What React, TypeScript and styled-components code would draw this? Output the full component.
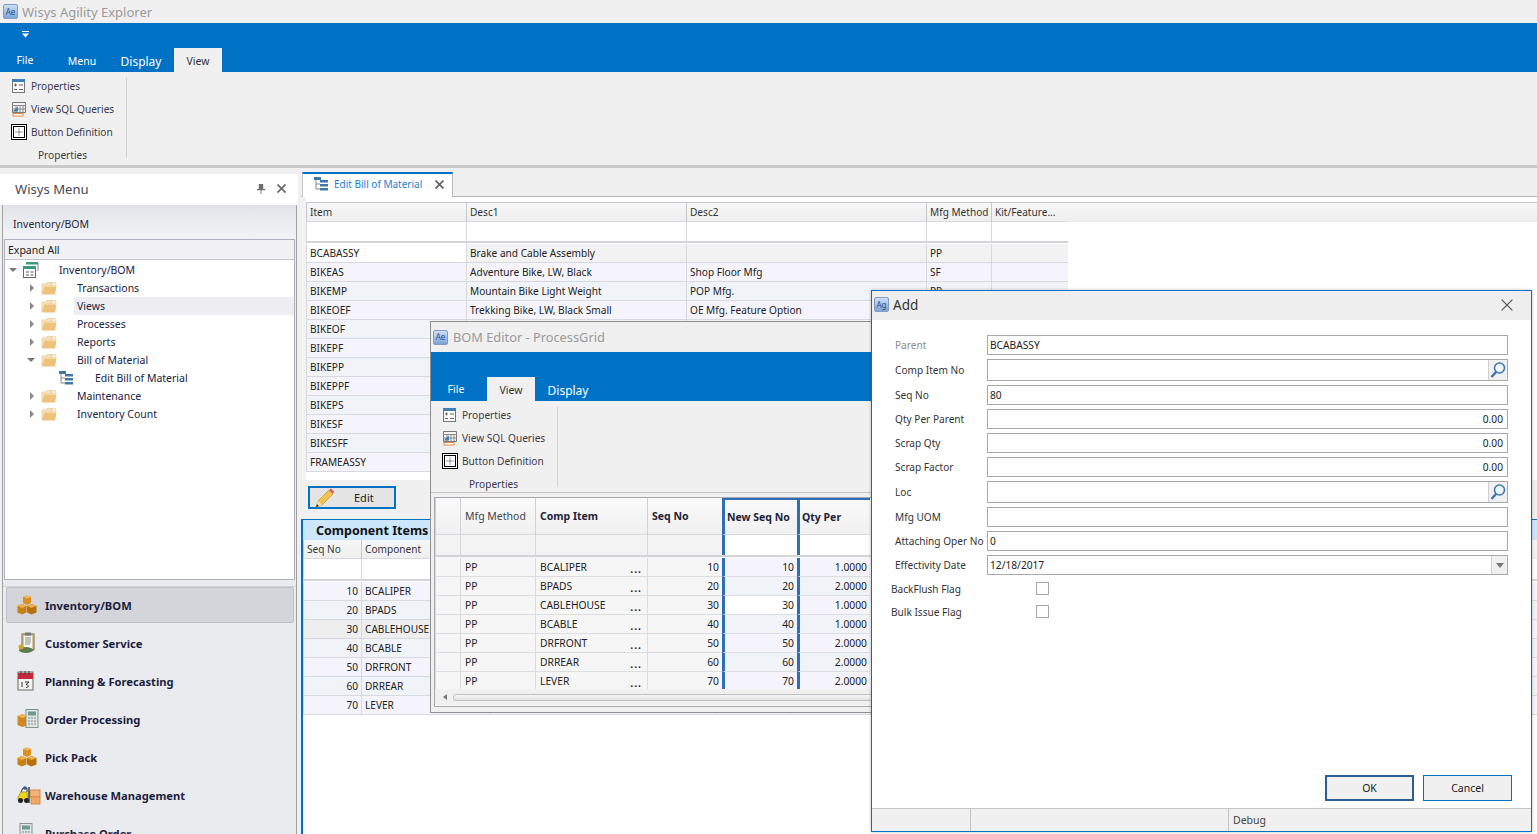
import styled, { createGlobalStyle } from "styled-components";

const GlobalStyle = createGlobalStyle`
  html, body {
    margin: 0;
    padding: 0;
    background: #f0f0f0;
  }
  * {
    box-sizing: border-box;
  }
`;

const UI_FONT = `"Noto Sans", "DejaVu Sans", sans-serif`;
const BLUE = "#0072c6";
const EDIT_LINE = "#2f6db8";

/* ---------- icons ---------- */

const PropertiesIcon = () => (
  <svg width="16" height="16" viewBox="0 0 16 16">
    <rect x="1.5" y="1.5" width="12" height="13" fill="#fafafa" stroke="#777" />
    <rect x="1" y="1" width="13" height="3" fill="#3f7fb8" />
    <path d="M3 7h3M4.5 5.5v3M8 7h4M3 11.5h3M8 11.5h4" stroke="#666" fill="none" />
  </svg>
);

const SqlIcon = () => (
  <svg width="16" height="16" viewBox="0 0 16 16">
    <path d="M1.5 1.5h13v10h-13z" fill="#f4f4f4" stroke="#777" />
    <path d="M1 4.5h14M5 4.5v7M9 4.5v7M12 4.5v7M1 8h14" stroke="#8a8a8a" fill="none" />
    <path d="M1.5 10.5 7 5.5v5z" fill="#3f7fb8" />
    <rect x="2" y="12.5" width="10" height="2.5" fill="#fff" stroke="#e58a3c" />
  </svg>
);

const ButtonDefIcon = () => (
  <svg width="16" height="16" viewBox="0 0 16 16">
    <rect x="0.5" y="0.5" width="15" height="15" fill="#fff" stroke="#000" />
    <rect x="2.5" y="2.5" width="11" height="11" fill="#fff" stroke="#000" />
    <path d="M8 4.5v7M4.5 8h7" stroke="#333" strokeDasharray="1 1" fill="none" />
  </svg>
);

const FolderIcon = () => (
  <svg width="16" height="14" viewBox="0 0 16 14">
    <path d="M1 13V3h4l1-1.500h5V5H4.500z" fill="#f6e3bd" stroke="#e6c88f" strokeWidth="0.7" />
    <path d="M11 1.500h3.500L15 5h-4z" fill="#fbf1dc" stroke="#e6c88f" strokeWidth="0.6" />
    <path d="M1 13.500 3.500 5.500H15.500L14 13.500z" fill="#eec27c" />
  </svg>
);

const TreeListIcon = ({ size = 14 }: { size?: number }) => (
  <svg width={size} height={size} viewBox="0 0 14 14">
    <path d="M2 3v9h4M2 7h4" stroke="#888" fill="none" />
    <rect x="0" y="0" width="7" height="3" fill="#3f78ad" />
    <rect x="6" y="3" width="8" height="2.500" fill="#3f78ad" />
    <rect x="6" y="7" width="8" height="2.500" fill="#3f78ad" />
    <rect x="6" y="11" width="8" height="2.500" fill="#3f78ad" />
  </svg>
);

const RootIcon = () => (
  <svg width="17" height="16" viewBox="0 0 17 16">
    <path d="M3 1h12v8" fill="none" stroke="#888" />
    <rect x="3" y="0" width="12" height="2.500" fill="#3b9a7c" />
    <rect x="0.500" y="4.500" width="12" height="11" fill="#fff" stroke="#666" />
    <rect x="0" y="4" width="13" height="3" fill="#3b9a7c" />
    <path d="M3 10h3M7.500 10h3M3 13h3M7.500 13h3" stroke="#555" fill="none" />
  </svg>
);

const Boxes = () => (
  <svg width="20" height="20" viewBox="0 0 20 20">
    <path d="M6 2l4-1.500 4 1.500v6l-4 2-4-2z" fill="#d9901d" />
    <path d="M6 2l4 1.500 4-1.500-4-1.500z" fill="#f0bb55" />
    <path d="M0.500 11l4.500-2 4.500 2v6.500l-4.500 2-4.500-2z" fill="#c97f12" />
    <path d="M0.500 11l4.500 2 4.500-2-4.500-2z" fill="#eeb24a" />
    <path d="M10 11l4.500-2 5 2v6.500l-5 2-4.500-2z" fill="#b8700c" />
    <path d="M10 11l4.500 2 5-2-5-2z" fill="#ecae45" />
  </svg>
);

const ClipboardIcon = () => (
  <svg width="20" height="22" viewBox="0 0 20 22">
    <rect x="5" y="2" width="12" height="16" fill="#d7c9a4" stroke="#7d6b45" />
    <rect x="7" y="4" width="8" height="12" fill="#fbfbf4" />
    <path d="M8 6h6M8 8h6M8 10h6M8 12h5" stroke="#8a8a8a" />
    <rect x="8" y="0.500" width="6" height="3" fill="#777" />
    <ellipse cx="9" cy="18" rx="7" ry="3" fill="#5c7d4f" />
    <circle cx="4" cy="15" r="2.500" fill="#d7a428" />
  </svg>
);

const CalendarIcon = () => (
  <svg width="18" height="20" viewBox="0 0 18 20">
    <rect x="1" y="1" width="15" height="18" fill="#f1f1ef" stroke="#6b6b6b" />
    <rect x="1" y="2" width="15" height="6" fill="#c9283a" />
    <path d="M4 0v4M8 0v4M12 0v4" stroke="#444" />
    <path d="M5 11v5M8 11h4l-3 2.500c3 0 3 3 0 3" stroke="#333" fill="none" />
  </svg>
);

const OrderIcon = () => (
  <svg width="22" height="20" viewBox="0 0 22 20">
    <path d="M0.500 7l5-2 5 2v9l-5 2-5-2z" fill="#cf861a" />
    <path d="M0.500 7l5 2 5-2-5-2z" fill="#efb750" />
    <rect x="9" y="0.500" width="12" height="18" fill="#dfe6e4" stroke="#88928f" />
    <rect x="11" y="2.500" width="8" height="4" fill="#6f9a8f" />
    <path d="M11 9h8M11 12h8M11 15h8" stroke="#7d8a87" strokeDasharray="2 1" />
  </svg>
);

const ForkliftIcon = () => (
  <svg width="24" height="20" viewBox="0 0 24 20">
    <rect x="13" y="5" width="10" height="7" fill="#f3b27a" stroke="#d08a4c" />
    <rect x="14" y="12" width="9" height="7" fill="#f2a767" stroke="#d08a4c" />
    <path d="M1 12l3-5h6l1 8H1z" fill="#f0d51e" stroke="#8d7c12" strokeWidth="0.6" />
    <path d="M12 2v16" stroke="#444" strokeWidth="1.500" />
    <path d="M4 7l2-4h4v4" fill="none" stroke="#333" />
    <circle cx="8" cy="3" r="1.800" fill="#2a57a8" />
    <circle cx="3.500" cy="15.500" r="2.500" fill="#222" />
    <circle cx="9.500" cy="15.500" r="2.500" fill="#222" />
  </svg>
);

const CalcIcon = () => (
  <svg width="18" height="20" viewBox="0 0 18 20">
    <rect x="3" y="0.500" width="12" height="19" fill="#dfe6e4" stroke="#88928f" />
    <rect x="5" y="2.500" width="8" height="4" fill="#6f9a8f" />
    <path d="M5 9h8M5 12h8M5 15h8" stroke="#7d8a87" strokeDasharray="2 1" />
  </svg>
);

const PencilIcon = () => (
  <svg width="20" height="20" viewBox="0 0 20 20">
    <path d="M1 19l2-6L14 2l4 4L7 17z" fill="#f2c14e" stroke="#b88a25" strokeWidth="0.600" />
    <path d="M14 2l2-1.500 3 3L18 6z" fill="#d8556a" />
    <path d="M1 19l2-6 4 4z" fill="#f7e3c0" />
    <path d="M1 19l1-3 2 2z" fill="#333" />
  </svg>
);

const SearchIcon = () => (
  <svg width="18" height="18" viewBox="0 0 18 18">
    <circle cx="10.500" cy="7" r="5" fill="#eef5fb" stroke="#3f78ad" strokeWidth="1.600" />
    <path d="M7 11 2.500 16" stroke="#3f78ad" strokeWidth="2.600" />
  </svg>
);

const PinIcon = () => (
  <svg width="8" height="10" viewBox="0 0 9 11">
    <path d="M2 0h5v5.500h2V7H5v4H4V7H0V5.500h2z" fill="#6d6d6d" />
  </svg>
);

const CloseGlyph = ({ size = 9, color = "#6d6d6d", weight = 2 }: { size?: number; color?: string; weight?: number }) => (
  <svg width={size} height={size} viewBox="0 0 10 10">
    <path d="M0.500 0.500l9 9M9.500 0.500l-9 9" stroke={color} strokeWidth={weight} fill="none" />
  </svg>
);

const QuickAccessIcon = () => (
  <svg width="7" height="7" viewBox="0 0 7 7">
    <path d="M0 0h7v1H0zM0 2.500h7L3.500 6.500z" fill="#fff" />
  </svg>
);

/* ---------- data ---------- */

const treeRows = [
  { label: "Inventory/BOM", level: 0, arrow: "open", icon: "root" },
  { label: "Transactions", level: 1, arrow: "closed", icon: "folder" },
  { label: "Views", level: 1, arrow: "closed", icon: "folder", hover: true },
  { label: "Processes", level: 1, arrow: "closed", icon: "folder" },
  { label: "Reports", level: 1, arrow: "closed", icon: "folder" },
  { label: "Bill of Material", level: 1, arrow: "open", icon: "folder" },
  { label: "Edit Bill of Material", level: 2, arrow: "none", icon: "list" },
  { label: "Maintenance", level: 1, arrow: "closed", icon: "folder" },
  { label: "Inventory Count", level: 1, arrow: "closed", icon: "folder" },
];

const navItems = [
  { label: "Inventory/BOM", icon: <Boxes />, active: true },
  { label: "Customer Service", icon: <ClipboardIcon /> },
  { label: "Planning & Forecasting", icon: <CalendarIcon /> },
  { label: "Order Processing", icon: <OrderIcon /> },
  { label: "Pick Pack", icon: <Boxes /> },
  { label: "Warehouse Management", icon: <ForkliftIcon /> },
  { label: "Purchase Order", icon: <CalcIcon /> },
];

const itemRows = [
  ["BCABASSY", "Brake and Cable Assembly", "", "PP", ""],
  ["BIKEAS", "Adventure Bike, LW, Black", "Shop Floor Mfg", "SF", ""],
  ["BIKEMP", "Mountain Bike Light Weight", "POP Mfg.", "PP", ""],
  ["BIKEOEF", "Trekking Bike, LW, Black Small", "OE Mfg. Feature Option", "PP", ""],
  ["BIKEOF", "", "", "", ""],
  ["BIKEPF", "", "", "", ""],
  ["BIKEPP", "", "", "", ""],
  ["BIKEPPF", "", "", "", ""],
  ["BIKEPS", "", "", "", ""],
  ["BIKESF", "", "", "", ""],
  ["BIKESFF", "", "", "", ""],
  ["FRAMEASSY", "", "", "", ""],
];

const components = [
  { seq: 10, item: "BCALIPER", qty: "1.0000" },
  { seq: 20, item: "BPADS", qty: "2.0000" },
  { seq: 30, item: "CABLEHOUSE", qty: "1.0000" },
  { seq: 40, item: "BCABLE", qty: "1.0000" },
  { seq: 50, item: "DRFRONT", qty: "2.0000" },
  { seq: 60, item: "DRREAR", qty: "2.0000" },
  { seq: 70, item: "LEVER", qty: "2.0000" },
];

const ITEM_COLS = "160px 220px 240px 65px 77px";
const COMP_COLS = "58px 129px 225px 75px 75px 75px 1fr";
const BOM_COLS = "25px 75px 112px 75px 75px 73px";

const rowTint = (i: number) => (i % 2 === 0 ? "#f5f4fc" : "#f0f4f9");

const fields = [
  { label: "Parent", value: "BCABASSY", muted: true, gap: 0 },
  { label: "Comp Item No", value: "", kind: "search", gap: 4 },
  { label: "Seq No", value: "80", gap: 4 },
  { label: "Qty Per Parent", value: "0.00", right: true, gap: 4 },
  { label: "Scrap Qty", value: "0.00", right: true, gap: 4 },
  { label: "Scrap Factor", value: "0.00", right: true, gap: 4 },
  { label: "Loc", value: "", kind: "search", gap: 4 },
  { label: "Mfg UOM", value: "", gap: 4 },
  { label: "Attaching Oper No", value: "0", gap: 4 },
  { label: "Effectivity Date", value: "12/18/2017", kind: "date", gap: 4 },
];

/* ---------- shared ribbon ---------- */

function RibbonGroup() {
  return (
    <RibbonGroupBox>
      <RibbonButton>
        <PropertiesIcon />
        Properties
      </RibbonButton>
      <RibbonButton>
        <SqlIcon />
        View SQL Queries
      </RibbonButton>
      <RibbonButton>
        <ButtonDefIcon />
        Button Definition
      </RibbonButton>
      <RibbonGroupLabel>Properties</RibbonGroupLabel>
    </RibbonGroupBox>
  );
}

/* ---------- BOM Editor window ---------- */

function BomEditor() {
  return (
    <BomWindow>
      <WindowTitle>
        <AppBadge>Ae</AppBadge>
        BOM Editor - ProcessGrid
      </WindowTitle>
      <BomBand>
        <RibbonTab $width={50} $raise>File</RibbonTab>
        <RibbonTab $width={48} $active $before={6}>View</RibbonTab>
        <RibbonTab $width={54} $large $before={6}>Display</RibbonTab>
      </BomBand>
      <BomRibbonBody>
        <RibbonGroup />
      </BomRibbonBody>
      <BomGrid>
        <BomHeadRow>
          <BomHead />
          <BomHead>Mfg Method</BomHead>
          <BomHead $bold>Comp Item</BomHead>
          <BomHead $bold>Seq No</BomHead>
          <BomHead $bold $edit>New Seq No</BomHead>
          <BomHead $bold $edit>Qty Per</BomHead>
        </BomHeadRow>
        <BomFilterRow>
          <BomFilter />
          <BomFilter />
          <BomFilter />
          <BomFilter />
          <BomFilter $edit />
          <BomFilter $edit />
        </BomFilterRow>
        <BomBody>
          {components.map((c, i) => (
            <BomRow key={c.seq}>
              <BomCell />
              <BomCell>PP</BomCell>
              <BomCell $split>
                {c.item}
                <span>...</span>
              </BomCell>
              <BomCell $right>{c.seq}</BomCell>
              <BomCell $right $edit $tint={i === 2 ? "#ffffff" : rowTint(i)}>{c.seq}</BomCell>
              <BomCell $right $edit $tint={rowTint(i === 2 ? 0 : i)}>{c.qty}</BomCell>
            </BomRow>
          ))}
        </BomBody>
        <ScrollRow>
          <ScrollArrow />
          <ScrollThumb />
        </ScrollRow>
      </BomGrid>
    </BomWindow>
  );
}

/* ---------- Add dialog ---------- */

function AddDialog() {
  return (
    <Dialog>
      <DialogTitle>
        <DialogTitleText>
          <AppBadge>Ag</AppBadge>
          Add
        </DialogTitleText>
        <CloseGlyph size={12} color="#555" weight={1} />
      </DialogTitle>
      <DialogBody>
        {fields.map((f) => (
          <FieldRow key={f.label} $gap={f.gap}>
            <FieldLabel $muted={f.muted}>{f.label}</FieldLabel>
            <FieldInput $tall={f.kind === "search"} $right={f.right}>
              <FieldValue>{f.value}</FieldValue>
              {f.kind === "search" && (
                <FieldAddon>
                  <SearchIcon />
                </FieldAddon>
              )}
              {f.kind === "date" && (
                <FieldAddon $narrow>
                  <DateArrow />
                </FieldAddon>
              )}
            </FieldInput>
          </FieldRow>
        ))}
        <CheckRow $first>
          <CheckLabel>BackFlush Flag</CheckLabel>
          <CheckBox />
        </CheckRow>
        <CheckRow>
          <CheckLabel>Bulk Issue Flag</CheckLabel>
          <CheckBox />
        </CheckRow>
      </DialogBody>
      <DialogButtons>
        <DialogButton $primary>OK</DialogButton>
        <DialogButton>Cancel</DialogButton>
      </DialogButtons>
      <StatusBar>
        <StatusCell $width={99} />
        <StatusCell $width={258} />
        <StatusCell $width={300}>Debug</StatusCell>
      </StatusBar>
    </Dialog>
  );
}

/* ---------- page ---------- */

export default function App() {
  return (
    <Page>
      <GlobalStyle />
      <TitleBar>
        <AppBadge>Ae</AppBadge>
        Wisys Agility Explorer
      </TitleBar>
      <MainBand>
        <QuickAccess>
          <QuickAccessIcon />
        </QuickAccess>
        <TabsRow>
          <RibbonTab $width={50} $raise>File</RibbonTab>
          <RibbonTab $width={64}>Menu</RibbonTab>
          <RibbonTab $width={54} $large>Display</RibbonTab>
          <RibbonTab $width={48} $active $before={6}>View</RibbonTab>
        </TabsRow>
      </MainBand>
      <RibbonBody>
        <RibbonGroup />
      </RibbonBody>
      <RibbonShadow />

      <Workspace>
        <SidePanel>
          <SideHeading>
            Wisys Menu
            <SideHeadingTools>
              <PinIcon />
              <CloseGlyph />
            </SideHeadingTools>
          </SideHeading>
          <SideBox>
            <SideSection>Inventory/BOM</SideSection>
            <TreeBox>
              <ExpandAll>Expand All</ExpandAll>
              {treeRows.map((r) => (
                <TreeRow key={r.label} $level={r.level}>
                  <TreeArrow $state={r.arrow} />
                  <TreeIconCell>
                    {r.icon === "root" && <RootIcon />}
                    {r.icon === "folder" && <FolderIcon />}
                    {r.icon === "list" && <TreeListIcon />}
                  </TreeIconCell>
                  <TreeLabel $hover={r.hover}>{r.label}</TreeLabel>
                </TreeRow>
              ))}
            </TreeBox>
            <NavSplitter />
            <NavList>
              {navItems.map((n) => (
                <NavButton key={n.label} $active={n.active}>
                  <NavIcon>{n.icon}</NavIcon>
                  {n.label}
                </NavButton>
              ))}
            </NavList>
          </SideBox>
        </SidePanel>

        <MainPanel>
          <TabStrip>
            <DocTab>
              <TreeListIcon />
              Edit Bill of Material
              <CloseGlyph size={9} color="#666" />
            </DocTab>
          </TabStrip>
          <ItemPane>
            <GridHeadRow $cols={ITEM_COLS}>
              {["Item", "Desc1", "Desc2", "Mfg Method", "Kit/Feature..."].map((h) => (
                <HeadCell key={h}>{h}</HeadCell>
              ))}
            </GridHeadRow>
            <ItemFilterRow $cols={ITEM_COLS}>
              {[0, 1, 2, 3, 4].map((i) => (
                <FilterCell key={i} />
              ))}
            </ItemFilterRow>
            <FilterGap $width={762} />
            {itemRows.map((row, i) => (
              <DataRow key={row[0]} $cols={ITEM_COLS} $width={762}>
                {row.map((v, j) => (
                  <DataCell key={j} $tint={i === 0 ? (j === 0 ? "#ffffff" : "#f2f2f2") : rowTint(i + 1)}>
                    {v}
                  </DataCell>
                ))}
              </DataRow>
            ))}
          </ItemPane>
          <EditBar>
            <EditButton>
              <PencilIcon />
              <EditLabel>Edit</EditLabel>
            </EditButton>
          </EditBar>
          <ComponentPane>
            <ComponentBand>Component Items</ComponentBand>
            <GridHeadRow $cols={COMP_COLS}>
              <HeadCell>Seq No</HeadCell>
              <HeadCell>Component</HeadCell>
            </GridHeadRow>
            <CompFilterRow $cols={COMP_COLS}>
              <FilterCell />
              <FilterCell />
            </CompFilterRow>
            <FilterGap />
            {components.map((c, i) => (
              <DataRow key={c.seq} $cols={COMP_COLS}>
                <DataCell $right $tint={i === 2 ? "#eeeeee" : rowTint(i)}>{c.seq}</DataCell>
                <DataCell $tint={i === 2 ? "#eeeeee" : rowTint(i)}>{c.item}</DataCell>
                <DataCell $tint={rowTint(i)} />
                <DataCell $tint={rowTint(i)} />
                <DataCell $tint={rowTint(i)} />
                <DataCell $tint={rowTint(i)} />
                <DataCell $tint={rowTint(i)} />
              </DataRow>
            ))}
          </ComponentPane>
        </MainPanel>
      </Workspace>

      <BomEditor />
      <AddDialog />
    </Page>
  );
}

/* ---------- styles ---------- */

const Page = styled.div`
  position: relative;
  width: 1537px;
  height: 834px;
  overflow: hidden;
  background: #f0f0f0;
  font-family: ${UI_FONT};
  font-size: 11px;
  color: #222;
  display: flex;
  flex-direction: column;
`;

const TitleBar = styled.div`
  height: 23px;
  flex: none;
  display: flex;
  align-items: center;
  gap: 4px;
  padding-left: 3px;
  font-size: 13px;
  color: #9a9a9a;
`;

const AppBadge = styled.span`
  width: 15px;
  height: 15px;
  flex: none;
  display: inline-flex;
  align-items: center;
  justify-content: center;
  border: 1px solid #7f9cc4;
  border-radius: 2px;
  background: linear-gradient(#cfe0f5, #7fa4d8);
  font-size: 8px;
  line-height: 1;
  color: #2b4d86;
`;

const MainBand = styled.div`
  height: 49px;
  flex: none;
  background: ${BLUE};
  display: flex;
  flex-direction: column;
  justify-content: space-between;
`;

const QuickAccess = styled.div`
  height: 14px;
  padding: 8px 0 0 22px;
  display: flex;
`;

const TabsRow = styled.div`
  display: flex;
`;

const RibbonTab = styled.div<{ $width: number; $active?: boolean; $large?: boolean; $before?: number; $raise?: boolean }>`
  width: ${({ $width }) => $width}px;
  height: 24px;
  margin-left: ${({ $before }) => $before ?? 0}px;
  display: flex;
  align-items: center;
  justify-content: center;
  font-size: ${({ $large }) => ($large ? 12 : 10.5)}px;
  padding-top: ${({ $raise }) => ($raise ? 0 : 2)}px;
  color: ${({ $active }) => ($active ? "#333" : "#fff")};
  background: ${({ $active }) => ($active ? "#f0f0f0" : "transparent")};
`;

const RibbonBody = styled.div`
  height: 93px;
  flex: none;
  padding-top: 2px;
  display: flex;
`;

const RibbonGroupBox = styled.div`
  position: relative;
  width: 127px;
  height: 84px;
  padding-left: 11px;
  display: flex;
  flex-direction: column;

  &::after {
    content: "";
    position: absolute;
    right: 0;
    top: 4px;
    bottom: 0;
    width: 1px;
    background: #d4d4d4;
  }
`;

const RibbonButton = styled.div`
  height: 23px;
  flex: none;
  display: flex;
  align-items: center;
  gap: 4px;
  white-space: nowrap;
  color: #3a3a48;
  font-size: 10.1px;
`;

const RibbonGroupLabel = styled.div`
  height: 23px;
  flex: none;
  padding-left: 27px;
  display: flex;
  align-items: center;
  color: #3a3a48;
  font-size: 10.1px;
`;

const RibbonShadow = styled.div`
  height: 3px;
  flex: none;
  background: #c9c9c9;
`;

const Workspace = styled.div`
  flex: 1;
  min-height: 0;
  display: flex;
  gap: 3px;
`;

const SidePanel = styled.div`
  width: 298px;
  flex: none;
  display: flex;
  flex-direction: column;
  padding-top: 6px;
`;

const SideHeading = styled.div`
  height: 31px;
  flex: none;
  padding: 0 12px 2px 15px;
  background: #fff;
  display: flex;
  align-items: center;
  justify-content: space-between;
  font-size: 13.1px;
  color: #4a4a58;
`;

const SideHeadingTools = styled.div`
  display: flex;
  align-items: center;
  gap: 12px;
`;

const SideBox = styled.div`
  flex: 1;
  min-height: 0;
  margin: 0 1px 0 2px;
  border-left: 1px solid #a0a0a0;
  border-right: 1px solid #a0a0a0;
  background: #e9ebef;
  display: flex;
  flex-direction: column;
`;

const SideSection = styled.div`
  height: 34px;
  flex: none;
  padding: 4px 0 0 10px;
  display: flex;
  align-items: center;
  background: linear-gradient(#e2e4ea, #f2f3f5);
  color: #2a2a38;
  font-size: 10.5px;
`;

const TreeBox = styled.div`
  height: 341px;
  flex: none;
  margin: 0 1px 0 1px;
  border: 1px solid #aeb2bc;
  background: #fff;
`;

const ExpandAll = styled.div`
  height: 20px;
  margin-bottom: 1px;
  padding-left: 3px;
  display: flex;
  align-items: center;
  background: #f1f1f3;
  border-bottom: 1px solid #c4c7ce;
  color: #222;
  font-size: 10.5px;
`;

const TreeRow = styled.div<{ $level: number }>`
  height: 18px;
  display: flex;
  align-items: center;
  padding-left: ${({ $level }) => 2 + $level * 18}px;
  color: #20223e;
  font-size: 10.5px;
`;

const TreeArrow = styled.span<{ $state: string }>`
  width: 16px;
  height: 18px;
  flex: none;
  position: relative;

  &::before {
    content: "";
    position: absolute;
    display: ${({ $state }) => ($state === "none" ? "none" : "block")};
    ${({ $state }) =>
      $state === "open"
        ? `left: 2px; top: 7px; border-left: 4px solid transparent; border-right: 4px solid transparent; border-top: 4px solid #777;`
        : `left: 5px; top: 5px; border-top: 4px solid transparent; border-bottom: 4px solid transparent; border-left: 4px solid #888;`}
  }
`;

const TreeIconCell = styled.span`
  width: 36px;
  flex: none;
  display: flex;
  align-items: center;
`;

const TreeLabel = styled.span<{ $hover?: boolean }>`
  flex: 1;
  height: 18px;
  margin-left: -3px;
  padding-left: 3px;
  display: flex;
  align-items: center;
  white-space: nowrap;
  background: ${({ $hover }) => ($hover ? "#eeeef2" : "transparent")};
`;

const NavSplitter = styled.div`
  height: 7px;
  flex: none;
  border-bottom: 1px solid #d0d2d8;
`;

const NavList = styled.div`
  flex: 1;
  min-height: 0;
  padding: 0 2px 0 3px;
  display: flex;
  flex-direction: column;
`;

const NavButton = styled.div<{ $active?: boolean }>`
  height: ${({ $active }) => ($active ? 36 : 38)}px;
  flex: none;
  margin-bottom: ${({ $active }) => ($active ? 1 : 0)}px;
  padding-left: 10px;
  display: flex;
  align-items: center;
  font-weight: 700;
  font-size: 11.2px;
  color: #1c1e40;
  border-radius: 2px;
  background: ${({ $active }) => ($active ? "#d3d5da" : "transparent")};
  border: 1px solid ${({ $active }) => ($active ? "#bfc2c9" : "transparent")};
`;

const NavIcon = styled.span`
  width: 28px;
  height: 24px;
  flex: none;
  display: flex;
  align-items: center;
  justify-content: flex-start;
`;

const MainPanel = styled.div`
  flex: 1;
  min-width: 0;
  display: flex;
  flex-direction: column;
  padding-top: 4px;
`;

const TabStrip = styled.div`
  height: 25px;
  flex: none;
  border-bottom: 1px solid #b5b5b5;
  display: flex;
  padding-left: 1px;
`;

const DocTab = styled.div`
  width: 151px;
  height: 25px;
  border-top: 2px solid ${BLUE};
  border-left: 1px solid #c8c8c8;
  border-right: 1px solid #b5b5b5;
  background: #fff;
  padding: 0 0 3px 11px;
  display: flex;
  align-items: center;
  gap: 6px;
  white-space: nowrap;
  color: #1a7fd0;
  font-size: 10px;

  svg:last-child {
    margin-left: 7px;
  }
`;

const ItemPane = styled.div`
  height: 283px;
  flex: none;
  padding-top: 5px;
  background: #fff;
  border-left: 5px solid #f2f2f2;
  display: flex;
  flex-direction: column;
`;

const GridHeadRow = styled.div<{ $cols: string }>`
  height: ${({ $cols }) => ($cols === ITEM_COLS ? 20 : 19)}px;
  flex: none;
  display: grid;
  grid-template-columns: ${({ $cols }) => $cols};
  background: linear-gradient(#f7f7f8, #eeeeef);
  box-shadow: ${({ $cols }) => ($cols === ITEM_COLS ? "inset 0 1px 0 #c6c8ce" : "none")};
`;

const HeadCell = styled.div`
  padding-left: 3px;
  display: flex;
  align-items: center;
  white-space: nowrap;
  overflow: hidden;
  border-left: 1px solid #c6c8ce;
  border-bottom: 1px solid #d8d9de;
  font-size: 10.1px;
  color: #333;
`;

const ItemFilterRow = styled.div<{ $cols: string }>`
  width: 762px;
  height: 19px;
  flex: none;
  display: grid;
  grid-template-columns: ${({ $cols }) => $cols};
  background: #fff;
`;

const CompFilterRow = styled.div<{ $cols: string }>`
  height: 20px;
  flex: none;
  display: grid;
  grid-template-columns: ${({ $cols }) => $cols};
  background: #fff;
`;

const FilterCell = styled.div`
  border-left: 1px solid #d8d9de;
`;

const FilterGap = styled.div<{ $width?: number }>`
  width: ${({ $width }) => ($width ? `${$width}px` : "100%")};
  height: 3px;
  flex: none;
  border-top: 2px solid #d3d4d8;
`;

const DataRow = styled.div<{ $cols: string; $width?: number }>`
  width: ${({ $width }) => ($width ? `${$width}px` : "100%")};
  height: 19px;
  flex: none;
  display: grid;
  grid-template-columns: ${({ $cols }) => $cols};
`;

const DataCell = styled.div<{ $tint?: string; $right?: boolean }>`
  padding: 0 3px 0 3px;
  display: flex;
  align-items: center;
  justify-content: ${({ $right }) => ($right ? "flex-end" : "flex-start")};
  white-space: nowrap;
  overflow: hidden;
  background: ${({ $tint }) => $tint ?? "#fff"};
  border-left: 1px solid #d8d9de;
  border-bottom: 1px solid #d8d9de;
  font-size: 10.1px;
  color: #222;
`;

const EditBar = styled.div`
  height: 39px;
  flex: none;
  padding: 6px 0 0 7px;
  background: #f0f0f0;
`;

const EditButton = styled.div`
  width: 88px;
  height: 23px;
  border: 2px solid ${BLUE};
  background: #e4e4e4;
  display: flex;
  align-items: center;
  padding-left: 5px;
`;

const EditLabel = styled.span`
  margin-left: 19px;
  font-size: 11px;
  color: #222;
`;

const ComponentPane = styled.div`
  flex: 1;
  min-height: 0;
  background: #fff;
  border-top: 1px solid ${BLUE};
  border-left: 2px solid ${BLUE};
  display: flex;
  flex-direction: column;
`;

const ComponentBand = styled.div`
  height: 20px;
  flex: none;
  padding-left: 13px;
  display: flex;
  align-items: center;
  background: #cce6fb;
  font-weight: 700;
  font-size: 12.5px;
  color: #111;
`;

const BomWindow = styled.div`
  position: absolute;
  left: 430px;
  top: 321px;
  width: 445px;
  height: 392px;
  border: 1px solid #8f8f8f;
  background: #f0f0f0;
  display: flex;
  flex-direction: column;
  overflow: hidden;
`;

const WindowTitle = styled.div`
  height: 30px;
  flex: none;
  padding-left: 2px;
  display: flex;
  align-items: center;
  gap: 5px;
  font-size: 12.8px;
  color: #9a9a9a;
`;

const BomBand = styled.div`
  height: 49px;
  flex: none;
  background: ${BLUE};
  display: flex;
  align-items: flex-end;
`;

const BomRibbonBody = styled.div`
  height: 92px;
  flex: none;
  padding-top: 2px;
  border-bottom: 1px solid #c4c4c4;
  display: flex;
`;

const BomGrid = styled.div`
  flex: 1;
  min-height: 0;
  margin: 4px 0 5px 3px;
  border: 1px solid #a6a8ae;
  border-right: none;
  background: #f6f6f7;
  display: flex;
  flex-direction: column;
`;

const BomHeadRow = styled.div`
  height: 37px;
  flex: none;
  display: grid;
  grid-template-columns: ${BOM_COLS};
  background: linear-gradient(#fafafa, #f0f0f1);
`;

const BomHead = styled.div<{ $bold?: boolean; $edit?: boolean }>`
  padding-left: ${({ $edit }) => ($edit ? 2 : 4)}px;
  display: flex;
  align-items: center;
  white-space: nowrap;
  font-weight: ${({ $bold }) => ($bold ? 700 : 400)};
  font-size: 10.5px;
  color: ${({ $bold }) => ($bold ? "#222238" : "#444")};
  border-left: ${({ $edit }) => ($edit ? `3px solid ${EDIT_LINE}` : "1px solid #cfd0d5")};
  border-top: ${({ $edit }) => ($edit ? `2px solid ${EDIT_LINE}` : "none")};
  border-bottom: 1px solid #d8d9de;
`;

const BomFilterRow = styled.div`
  height: 22px;
  flex: none;
  display: grid;
  grid-template-columns: ${BOM_COLS};
  border-bottom: 2px solid #d3d4d8;
`;

const BomFilter = styled.div<{ $edit?: boolean }>`
  background: ${({ $edit }) => ($edit ? "#fff" : "#f3f3f4")};
  border-left: ${({ $edit }) => ($edit ? `3px solid ${EDIT_LINE}` : "1px solid #d8d9de")};
`;

const BomBody = styled.div`
  height: 132px;
  flex: none;
  padding-top: 1px;
  overflow: hidden;
`;

const BomRow = styled.div`
  height: 19px;
  display: grid;
  grid-template-columns: ${BOM_COLS};
`;

const BomCell = styled.div<{ $right?: boolean; $edit?: boolean; $tint?: string; $split?: boolean }>`
  padding: 0 3px 0 4px;
  display: flex;
  align-items: center;
  justify-content: ${({ $right, $split }) => ($right ? "flex-end" : $split ? "space-between" : "flex-start")};
  white-space: nowrap;
  background: ${({ $tint }) => $tint ?? "transparent"};
  border-left: ${({ $edit }) => ($edit ? `3px solid ${EDIT_LINE}` : "1px solid #dcdde1")};
  border-bottom: 1px solid #dcdde1;
  font-size: 10.3px;
  color: #222;

  span {
    margin-right: 2px;
    padding-top: 3px;
    font-weight: 700;
    letter-spacing: 1px;
  }
`;

const ScrollRow = styled.div`
  height: 16px;
  flex: none;
  display: flex;
  align-items: center;
  padding-left: 8px;
  gap: 6px;
  background: #f0f0f0;
`;

const ScrollArrow = styled.span`
  width: 0;
  height: 0;
  border-top: 3px solid transparent;
  border-bottom: 3px solid transparent;
  border-right: 4px solid #777;
`;

const ScrollThumb = styled.span`
  flex: 1;
  height: 7px;
  border: 1px solid #bfc0c4;
  border-radius: 3px;
  background: linear-gradient(#f6f6f6, #e2e2e2);
`;

const Dialog = styled.div`
  position: absolute;
  left: 871px;
  top: 290px;
  width: 661px;
  height: 542px;
  border: 1px solid ${BLUE};
  background: #fff;
  display: flex;
  flex-direction: column;
  box-shadow: 0 0 3px rgba(0, 0, 0, 0.25);
`;

const DialogTitle = styled.div`
  height: 29px;
  flex: none;
  padding: 0 18px 2px 2px;
  background: #eeeeee;
  display: flex;
  align-items: center;
  justify-content: space-between;
`;

const DialogTitleText = styled.div`
  display: flex;
  align-items: center;
  gap: 4px;
  font-size: 13.5px;
  color: #333;
`;

const DialogBody = styled.div`
  flex: 1;
  min-height: 0;
  padding: 15px 23px 0 19px;
  display: flex;
  flex-direction: column;
`;

const FieldRow = styled.div<{ $gap: number }>`
  display: flex;
  align-items: center;
  margin-top: ${({ $gap }) => $gap}px;
`;

const FieldLabel = styled.label<{ $muted?: boolean }>`
  flex: none;
  width: 96px;
  padding-left: 4px;
  white-space: nowrap;
  font-size: 10.1px;
  color: ${({ $muted }) => ($muted ? "#8a8a8a" : "#333")};
`;

const FieldInput = styled.div<{ $tall?: boolean; $right?: boolean }>`
  flex: 1;
  height: ${({ $tall }) => ($tall ? 22 : 20)}px;
  border: 1px solid #a8a8a8;
  background: #fff;
  display: flex;
  align-items: center;
  justify-content: ${({ $right }) => ($right ? "flex-end" : "flex-start")};
  font-size: 10.2px;
  color: #222;
`;

const FieldValue = styled.span`
  padding: 0 4px 0 2px;
`;

const FieldAddon = styled.span<{ $narrow?: boolean }>`
  width: ${({ $narrow }) => ($narrow ? 16 : 19)}px;
  height: 100%;
  flex: none;
  margin-left: auto;
  border-left: 1px solid #cfcfcf;
  background: #f0f0f0;
  display: flex;
  align-items: center;
  justify-content: center;
`;

const DateArrow = styled.span`
  width: 0;
  height: 0;
  border-left: 4px solid transparent;
  border-right: 4px solid transparent;
  border-top: 5px solid #777;
`;

const CheckRow = styled.div<{ $first?: boolean }>`
  height: 13px;
  margin-top: ${({ $first }) => ($first ? 7 : 10)}px;
  display: flex;
  align-items: center;
`;

const CheckLabel = styled.span`
  width: 145px;
  flex: none;
  white-space: nowrap;
  font-size: 10.1px;
  color: #333;
`;

const CheckBox = styled.span`
  width: 13px;
  height: 13px;
  border: 1px solid #a8a8a8;
  background: #fff;
`;

const DialogButtons = styled.div`
  flex: none;
  padding: 0 19px 7px 0;
  display: flex;
  justify-content: flex-end;
  gap: 9px;
`;

const DialogButton = styled.div<{ $primary?: boolean }>`
  width: 89px;
  height: 26px;
  display: flex;
  align-items: center;
  justify-content: center;
  background: #f0f0f0;
  font-size: 10.5px;
  color: #222;
  border: ${({ $primary }) => ($primary ? "2px solid #2a5f8f" : `1px solid ${BLUE}`)};
`;

const StatusBar = styled.div`
  height: 23px;
  flex: none;
  background: #f0f0f0;
  border-top: 1px solid #c4c4c4;
  display: flex;
`;

const StatusCell = styled.div<{ $width: number }>`
  width: ${({ $width }) => $width}px;
  padding-left: 4px;
  display: flex;
  align-items: center;
  border-right: 1px solid #c4c4c4;
  font-size: 10.5px;
  color: #444;

  &:last-child {
    border-right: none;
  }
`;
